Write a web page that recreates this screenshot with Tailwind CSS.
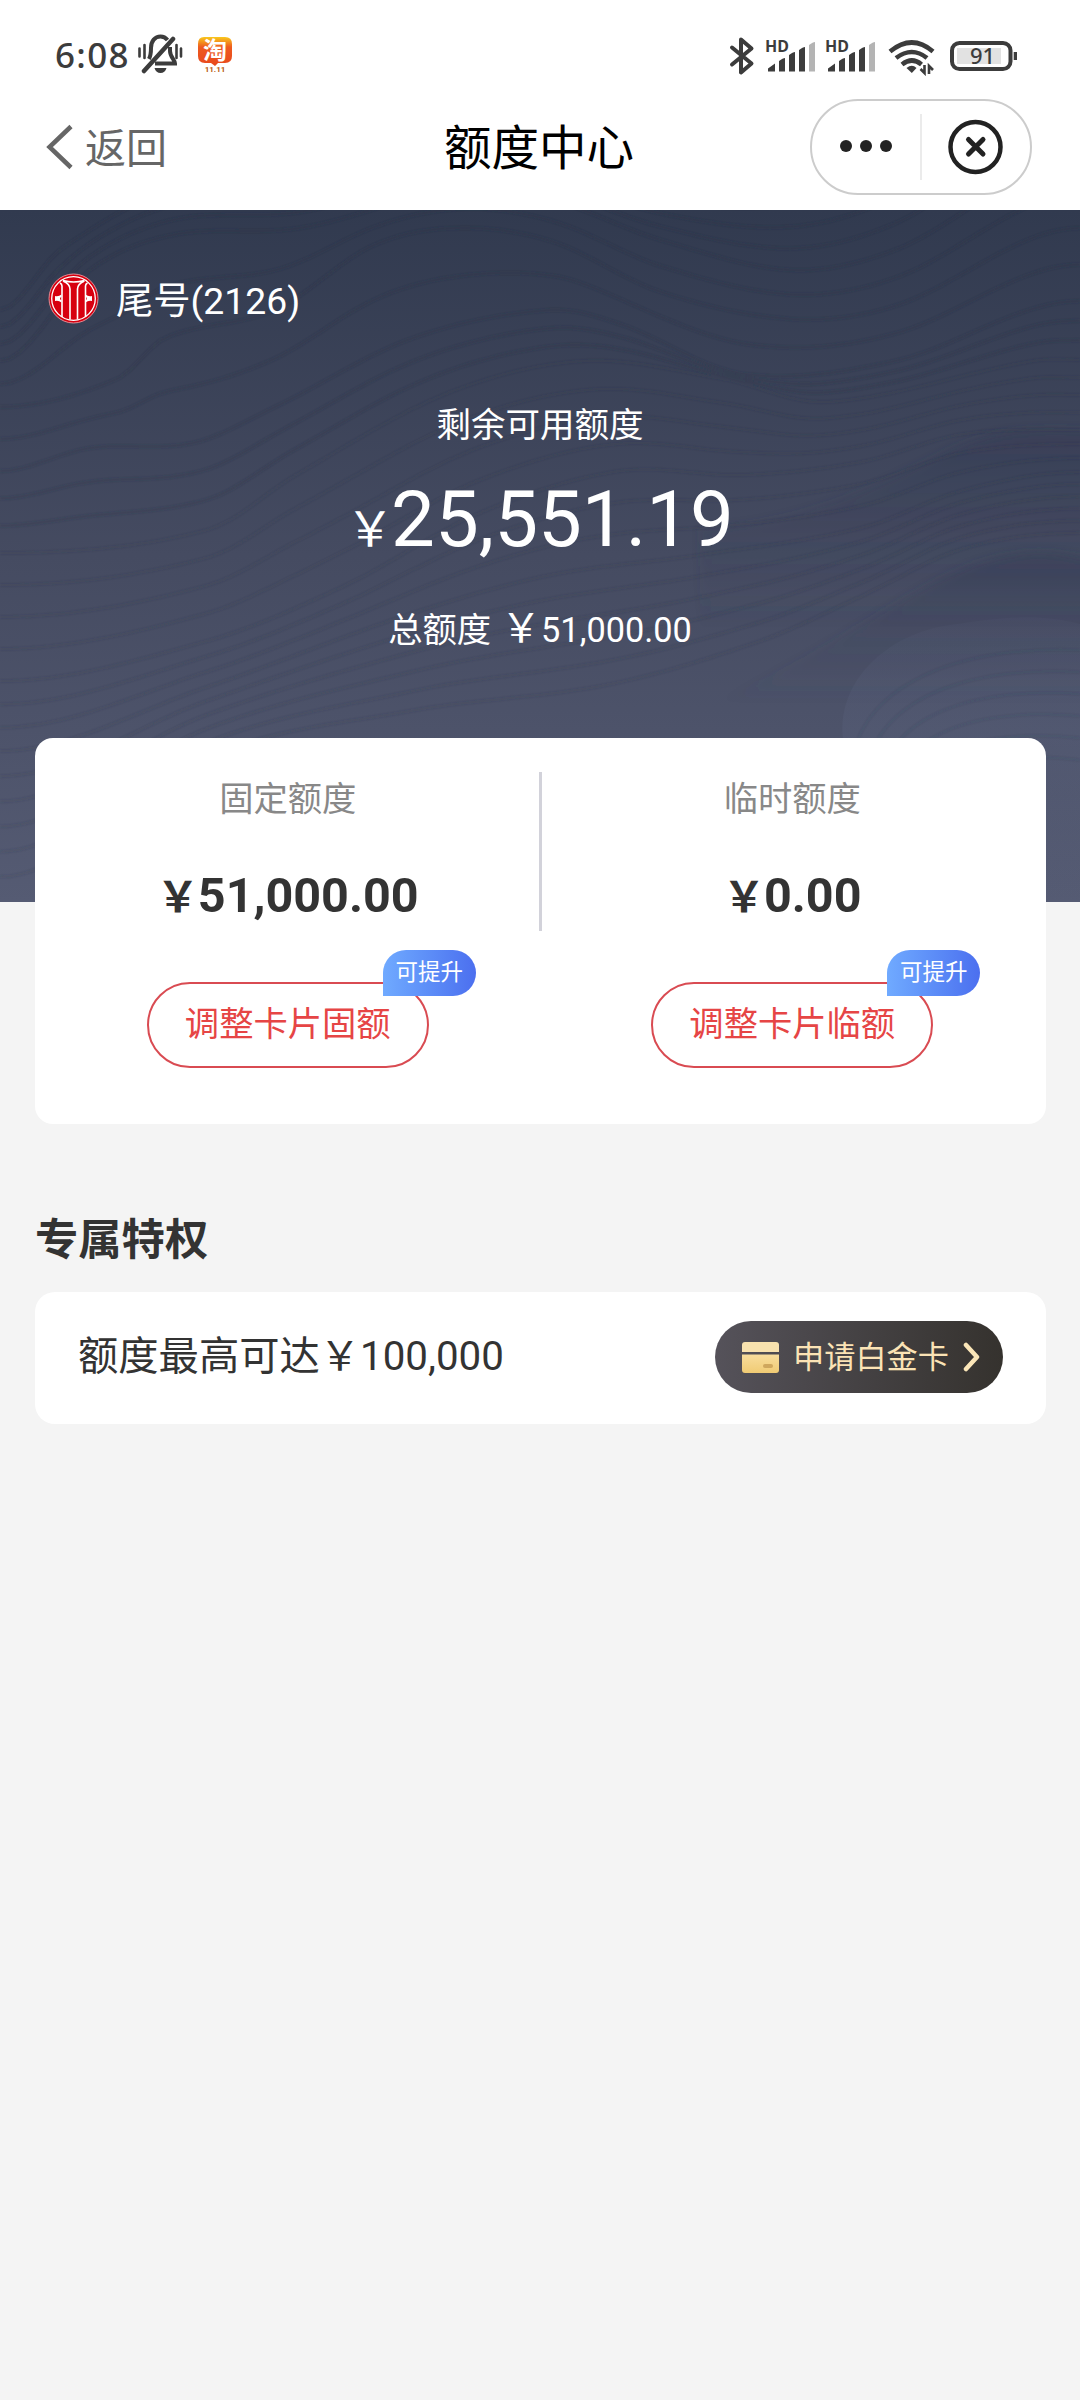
<!DOCTYPE html>
<html lang="zh-CN">
<head>
<meta charset="utf-8">
<title>额度中心</title>
<script src="https://cdn.jsdelivr.net/npm/@tailwindcss/browser@4"></script>
</head>
<body class="w-[1080px] min-h-[2400px] bg-[#f4f4f4] font-[Roboto,'Noto_Sans_CJK_SC',sans-serif] text-[#333333]">

<header class="bg-white">
  <!-- status bar -->
  <div class="flex h-[92px] items-center justify-between pt-[16px] pl-[55px] pr-[63px] text-[#3c3c3c]">
    <div class="flex items-center">
      <span class="w-[82px] whitespace-nowrap font-['Noto_Sans',sans-serif] text-[35px] font-medium leading-none tracking-[1.3px]">6:08</span>
      <svg width="46" height="40" viewBox="0 0 46 40" fill="none" stroke="#3c3c3c">
        <path d="M12 25c2-4 2-7 2-11 0-7 4-11.500 9.500-11.500 3 0 5.500 1.500 7 3.500M33 13v4c0 6 5 9 5 12.500H18" stroke-width="4"/>
        <path d="M7 37 36 5" stroke-width="4.500" stroke-linecap="round"/>
        <path d="M17.500 34h12c-1 3.500-3 5-6 5s-5-1.500-6-5z" fill="#3c3c3c" stroke="none"/>
        <path d="M2.500 14.500v8M7.500 11v13M39.500 11v13M44 14.500v8" stroke-width="2.600" stroke-linecap="round"/>
      </svg>
      <svg class="ml-[14px]" width="36" height="52" viewBox="0 -8 36 52">
        <defs><linearGradient id="tb" x1="0" y1="0" x2="0" y2="1"><stop offset="0" stop-color="#f9c81c"/><stop offset=".35" stop-color="#ee5a20"/><stop offset="1" stop-color="#e8481c"/></linearGradient></defs>
        <path d="M7 1h21q7 0 7 7v12q0 7-7 7h-7l-3 3-4-3H8q-7 0-7-7V8q0-7 6-7z" fill="url(#tb)"/>
        <text x="18" y="22.500" text-anchor="middle" font-family="Noto Sans CJK SC" font-weight="700" font-size="24" fill="#fff">淘</text>
        <text x="18" y="35.500" text-anchor="middle" font-family="Roboto" font-weight="700" font-size="8" fill="#b8590e">11.11</text>
      </svg>
    </div>
    <div class="flex items-center">
      <svg width="290" height="44" viewBox="726 31 290 44" fill="none">
        <path d="M731 46.500 750.500 62.500 740 71.500V38.500L750.500 47.500 731 63.500" stroke="#3c3c3c" stroke-width="4" stroke-linejoin="round" stroke-linecap="round"/>
        <g id="sig">
          <text x="764" y="51" font-family="Noto Sans" font-weight="700" font-size="16" fill="#3c3c3c">HD</text>
          <g fill="#3c3c3c"><path d="M767 70.500v-3l7-5v8zM778 70.500V60q4-3 6-3v13.500zM788 70.500V54q4-3 6-3v19.500zM798 70.500V49q4-3 6-3v24.500z"/></g>
          <path d="M808 70.500V44q4-3 6-3v29.500z" fill="#b4b4b4"/>
        </g>
        <use href="#sig" x="60"/>
        <g stroke="#3c3c3c" stroke-width="4.600">
          <path d="M889 50.500q22-18 43 0M895 57q16-12 31 0M901 63.500q10-8 19.500 0"/>
        </g>
        <path d="M905.500 67q5.500-4.500 10 0l-4.700 5z" fill="#3c3c3c"/>
        <path d="M923.500 64v8l-4-4M928 73v-8l4 4" stroke="#3c3c3c" stroke-width="2.600"/>
        <rect x="951" y="42" width="58.500" height="26" rx="7.500" stroke="#3c3c3c" stroke-width="4"/>
        <rect x="956" y="47" width="44" height="16" fill="#e2e2e2"/>
        <path d="M1014.500 51v8" stroke="#3c3c3c" stroke-width="3.600"/>
        <text x="981.500" y="63" text-anchor="middle" font-family="Noto Sans" font-weight="500" font-size="22" fill="#3c3c3c">91</text>
      </svg>
    </div>
  </div>

  <!-- title bar -->
  <div class="grid h-[118px] grid-cols-[1fr_auto_1fr] items-center pl-[46px] pr-[48px] pb-[8px]">
    <div class="flex items-center text-[#666666]">
      <svg width="28" height="46" viewBox="0 0 28 46" fill="none" stroke="#666" stroke-width="4.500"><path d="M25 2.500 3.500 23 25 43.500"/></svg>
      <span class="ml-[11px] mt-[4px] text-[41px] leading-none">返回</span>
    </div>
    <h1 class="mt-[5px] text-[47.500px] leading-none text-black">额度中心</h1>
    <div class="flex h-[96px] w-[222px] items-center justify-self-end rounded-full border-2 border-[#cccccc]">
      <div class="flex w-[108px] justify-center gap-[8px] pr-[1px] pb-[2px]">
        <i class="size-[12px] rounded-full bg-[#222]"></i><i class="size-[12px] rounded-full bg-[#222]"></i><i class="size-[12px] rounded-full bg-[#222]"></i>
      </div>
      <div class="h-[66px] w-[2px] bg-[#ebebeb]"></div>
      <div class="flex flex-1 justify-center">
        <svg width="56" height="56" viewBox="0 0 56 56" fill="none" stroke="#222"><circle cx="27.500" cy="28" r="25" stroke-width="4.500"/><path d="M20.500 20.500l14.500 14.500M35 20.500L20.500 35" stroke-width="5" stroke-linecap="round"/></svg>
      </div>
    </div>
  </div>
</header>

<section class="relative h-[692px] overflow-hidden bg-linear-to-b from-[#313a4f] via-[#454b61] to-[#555b73] text-white">
  <svg class="absolute inset-0" width="1080" height="692" viewBox="0 0 1080 692" fill="none">
    <defs>
      <linearGradient id="h1" x1="0" y1="0" x2="0" y2="1"><stop offset="0" stop-color="#2f3750" stop-opacity=".36"/><stop offset=".4" stop-color="#3a4158" stop-opacity="0"/></linearGradient>
      <linearGradient id="h3" x1="0" y1="0" x2="0" y2="1"><stop offset="0" stop-color="#5c6480" stop-opacity=".1"/><stop offset=".4" stop-color="#5c6480" stop-opacity=".28"/><stop offset="1" stop-color="#5c6480" stop-opacity="0"/></linearGradient>
      <filter id="soft" x="-10%" y="-10%" width="120%" height="120%"><feGaussianBlur stdDeviation="5"/></filter>
      <filter id="fine"><feGaussianBlur stdDeviation="1"/></filter>
    </defs>
    <path d="M700 318C800 315 880 275 940 245S1030 220 1100 220V720H700z" fill="url(#h1)" filter="url(#soft)"/>
    <path d="M640 520C760 480 850 420 920 380S1040 335 1100 352V720H640z" fill="url(#h1)" filter="url(#soft)"/>
    <path d="M845 540C830 480 880 425 950 415S1040 405 1080 414V692H900z" fill="url(#h3)"/>
    <g id="waves" stroke="#262d45" stroke-opacity=".22" stroke-width="3" filter="url(#fine)"></g>
  </svg>
  <div class="relative flex flex-col items-center">
    <div class="flex w-full items-center pl-[48px] pt-[61px]">
      <svg class="-mt-[2px]" width="51" height="51" viewBox="0 0 51 51" fill="none">
        <circle cx="25.500" cy="25.500" r="24.500" fill="#d7000f" stroke="#e08a94" stroke-width="1"/>
        <g stroke="#fff"><circle cx="25.500" cy="25.500" r="21.800" stroke-width="1.300"/>
        <path d="M14 44V13q0-2-2-3M22 46.500V16q0-5-7-8M29.500 46.500V16q0-5 7-8M37.500 44V13q0-2 2-3M15 7.500q10.500 3 21.500 0" stroke-width="1.600"/></g>
        <path d="M7 23q3.500 1 6.500-1.500v2.500q-1.500 0-1.500 1.500t1.500 1.500v2.500q-3-2.500-6.500-1.500zM44 23q-3.500 1-6.500-1.500v2.500q1.500 0 1.500 1.500t-1.500 1.500v2.500q3-2.500 6.500-1.500z" fill="#fff"/>
      </svg>
      <span class="ml-[17px] mt-[4px] text-[37.300px] leading-[52px]">尾号(2126)</span>
    </div>
    <p class="mt-[73px] text-[34.500px] leading-[50px]">剩余可用额度</p>
    <p class="mt-[30px] flex h-[80px] items-baseline leading-[80px]"><span class="w-[45px] text-[48px]">￥</span><span class="text-[78px]">25,551.19</span></p>
    <p class="mt-[44px] flex h-[50px] items-baseline text-[34.300px] leading-[50px]"><span>总额度</span><span class="ml-[10px] text-[40px]">￥</span><span>51,000.00</span></p>
  </div>
</section>

<main class="relative -mt-[164px] pl-[35px] pr-[34px]">
  <section class="flex h-[386px] rounded-[18px] bg-white pt-[34px]">
    <div class="flex flex-1 flex-col items-center pl-[2px]">
      <p class="text-[34.300px] leading-[55px] text-[#888888]">固定额度</p>
      <p class="mt-[36px] flex h-[66px] items-baseline leading-[66px] font-bold"><span class="w-[41px] text-[42px]">￥</span><span class="text-[48.500px]">51,000.00</span></p>
      <div class="relative mt-[53px] flex h-[86px] w-[282px] justify-center rounded-full border-2 border-[#d94b52]">
        <span class="text-[34.300px] leading-[80px] text-[#e64545]">调整卡片固额</span>
        <span class="absolute -top-[34px] left-[234px] h-[46px] w-[93px] rounded-t-full rounded-br-full bg-linear-to-r from-[#70aaff] to-[#4c6fef] text-center text-[22.500px] leading-[44px] text-white">可提升</span>
      </div>
    </div>
    <div class="h-[159px] w-[3px] bg-[#d2d2da]"></div>
    <div class="flex flex-1 flex-col items-center pr-[3px]">
      <p class="text-[34.300px] leading-[55px] text-[#888888]">临时额度</p>
      <p class="mt-[36px] flex h-[66px] items-baseline leading-[66px] font-bold"><span class="w-[41px] text-[42px]">￥</span><span class="text-[48.500px]">0.00</span></p>
      <div class="relative mt-[53px] flex h-[86px] w-[282px] justify-center rounded-full border-2 border-[#d94b52]">
        <span class="text-[34.300px] leading-[80px] text-[#e64545]">调整卡片临额</span>
        <span class="absolute -top-[34px] left-[234px] h-[46px] w-[93px] rounded-t-full rounded-br-full bg-linear-to-r from-[#70aaff] to-[#4c6fef] text-center text-[22.500px] leading-[44px] text-white">可提升</span>
      </div>
    </div>
  </section>

  <h2 class="mt-[87px] text-[43.300px] font-bold leading-[60px]">专属特权</h2>
  <section class="mt-[21px] flex h-[132px] items-center justify-between rounded-[20px] bg-white pl-[43px] pr-[43px] pb-[2px]">
    <p class="text-[40.300px] leading-[60px] whitespace-nowrap">额度最高可达<span>￥</span>100,000</p>
    <div class="flex h-[72px] w-[288px] items-center rounded-full bg-linear-to-r from-[#55525a] to-[#35322e] pl-[27px]">
      <svg width="37" height="31" viewBox="0 0 37 31">
        <defs><linearGradient id="cd" x1="0" y1="0" x2="0" y2="1"><stop offset="0" stop-color="#f8dd9c"/><stop offset="1" stop-color="#f0cb74"/></linearGradient></defs>
        <path d="M3 0h31q3 0 3 3v7H0V3q0-3 3-3z" fill="#f8e2ae"/><path d="M0 12.500h37V28q0 3-3 3H3q-3 0-3-3z" fill="url(#cd)"/><rect x="21" y="22" width="10" height="4" rx="2" fill="#cfa75d"/>
      </svg>
      <span class="ml-[14px] mt-[2px] text-[31.200px] leading-none text-[#fbe3b5]">申请白金卡</span>
      <svg class="ml-[14px]" width="18" height="30" viewBox="0 0 18 30" fill="none" stroke="#fbe6b8" stroke-width="4.500" stroke-linecap="round" stroke-linejoin="round"><path d="M3 3l11 12L3 27"/></svg>
    </div>
  </section>
</main>

<script>
// Contour key lines of the hero background; intermediate lines are blended between neighbours.
const keys = [
  [[0,100],[60,40],[172,-20],[300,-30],[455,-60],[661,-10],[792,-5],[895,-40],[1080,-160]],
  [[0,151],[90,60],[172,25],[300,18],[455,-20],[551,-10],[661,30],[792,60],[895,40],[1080,-50]],
  [[0,197],[117,169],[165,128],[275,100],[372,36],[455,18],[551,31],[661,82],[792,109],[895,96],[1080,18]],
  [[0,261],[90,238],[193,233],[275,197],[413,128],[551,100],[620,114],[744,164],[895,151],[1080,91]],
  [[0,343],[207,320],[296,265],[448,183],[585,151],[723,169],[826,192],[1033,151],[1080,150]],
  [[0,471],[207,431],[344,376],[482,302],[620,261],[744,265],[861,252],[964,224],[1080,220]],
  [[0,541],[207,477],[413,403],[551,365],[700,345],[861,318],[964,280],[1080,262]],
  [[0,692],[207,560],[413,520],[600,500],[760,450],[861,400],[964,350],[1080,335]]
];
const at = (k, x) => {
  let i = 0;
  while (i < k.length - 2 && x > k[i + 1][0]) i++;
  const slope = j => j <= 0 || j >= k.length - 1 ? 0 : (k[j+1][1] - k[j-1][1]) / (k[j+1][0] - k[j-1][0]);
  const h = k[i+1][0] - k[i][0], t = (x - k[i][0]) / h;
  return (2*t*t*t - 3*t*t + 1) * k[i][1] + (t*t*t - 2*t*t + t) * h * slope(i)
       + (3*t*t - 2*t*t*t) * k[i+1][1] + (t*t*t - t*t) * h * slope(i+1);
};
const waves = document.getElementById('waves');
const add = (d, o) => {
  const p = document.createElementNS('http://www.w3.org/2000/svg', 'path');
  p.setAttribute('d', d);
  p.setAttribute('opacity', o);
  waves.appendChild(p);
};
const steps = [3, 2, 2, 3, 4, 3, 6];
for (let n = 0; n < keys.length - 1; n++)
  for (let s = 0; s < steps[n]; s++) {
    const pts = [];
    for (let x = 0; x <= 1080; x += 10) {
      const f = s / steps[n];
      pts.push(x + ' ' + (at(keys[n], x) * (1 - f) + at(keys[n+1], x) * f).toFixed(1));
    }
    add('M' + pts.join('L'), n < 4 ? 1 : 0.6);
  }
for (let r = 0; r < 6; r++) add(`M${850 + r*16} ${570 + r*16}C${850 + r*8} ${480 + r*20} 950 ${435 + r*20} 1080 ${440 + r*22}`, 0.4);
</script>
</body>
</html>
